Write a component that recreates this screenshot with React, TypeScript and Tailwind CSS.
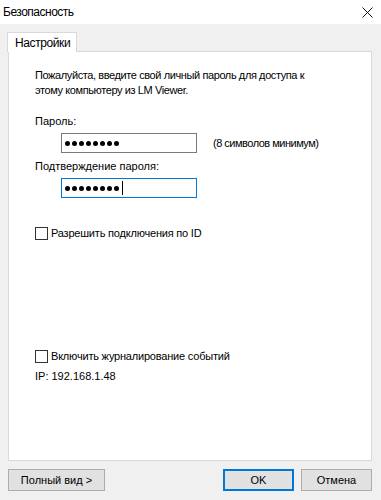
import React from "react";

const Dots = ({ cursor }: { cursor?: boolean }) => (
  <div className="flex items-center gap-[2px]">
    {Array.from({ length: 8 }).map((_, i) => (
      <div key={i} className="w-[5px] h-[5px] rounded-full bg-black" />
    ))}
    {cursor && <div className="w-px h-[14px] bg-black ml-[1px]" />}
  </div>
);

const Check = ({ label }: { label: string }) => (
  <div className="flex items-center h-[13px]">
    <div className="w-[13px] h-[13px] border border-[#333333] bg-white box-border" />
    <span className="ml-[3px] leading-[15px] tracking-[-0.2px]">{label}</span>
  </div>
);

export default function App() {
  return (
    <div
      className="w-[381px] h-[500px] bg-[#f0f0f0] flex flex-col text-[11px] text-black overflow-hidden"
      style={{ fontFamily: "Tahoma, 'Liberation Sans', Arial, sans-serif" }}
    >
      <div className="h-[24px] bg-white flex items-center justify-between pl-[3px] pr-[8px] shrink-0">
        <span className="text-[12px] tracking-[-0.5px]">Безопасность</span>
        <svg width="11" height="11" viewBox="0 0 11 11">
          <path d="M0.5 0.5 L10.5 10.5 M10.5 0.5 L0.5 10.5" stroke="#111" strokeWidth="1" />
        </svg>
      </div>
      <div className="pl-[8px] pt-[8px] flex flex-col">
        <div className="ml-[-1px] w-[70px] h-[20px] bg-white border border-b-0 border-[#d9d9d9] relative z-10 -mb-px flex items-center pl-[7px] text-[12px] tracking-[-0.4px]">
          Настройки
        </div>
        <div className="w-[364px] h-[410px] bg-white border border-[#d9d9d9] pl-[26px] pt-[16px]">
          <div className="leading-[15px] tracking-[-0.4px]">
            Пожалуйста, введите свой личный пароль для доступа к
            <br />
            этому компьютеру из LM Viewer.
          </div>
          <div className="leading-[15px] mt-[16px]">Пароль:</div>
          <div className="flex items-center mt-[4px]">
            <div className="ml-[26px] w-[136px] h-[20px] border border-[#7a7a7a] flex items-center pl-[3px]">
              <Dots />
            </div>
            <span className="ml-[16px] tracking-[-0.5px]">(8 символов минимум)</span>
          </div>
          <div className="leading-[15px] mt-[6px]">Подтверждение пароля:</div>
          <div className="flex items-center mt-[4px]">
            <div className="ml-[26px] w-[136px] h-[20px] border border-[#0078d7] flex items-center pl-[3px]">
              <Dots cursor />
            </div>
          </div>
          <div className="mt-[29px]">
            <Check label="Разрешить подключения по ID" />
          </div>
          <div className="mt-[110px]">
            <Check label="Включить журналирование событий" />
          </div>
          <div className="leading-[15px] mt-[6px]">IP: 192.168.1.48</div>
        </div>
        <div className="flex mt-[8px] w-[364px]">
          <button className="w-[97px] h-[22px] bg-[#e1e1e1] border border-[#adadad] flex items-center justify-center">
            Полный вид &gt;
          </button>
          <button className="ml-auto w-[71px] h-[22px] bg-[#e1e1e1] border-2 border-[#0078d7] flex items-center justify-center">
            OK
          </button>
          <button className="ml-[7px] w-[71px] h-[22px] bg-[#e1e1e1] border border-[#adadad] flex items-center justify-center">
            Отмена
          </button>
        </div>
      </div>
    </div>
  );
}
